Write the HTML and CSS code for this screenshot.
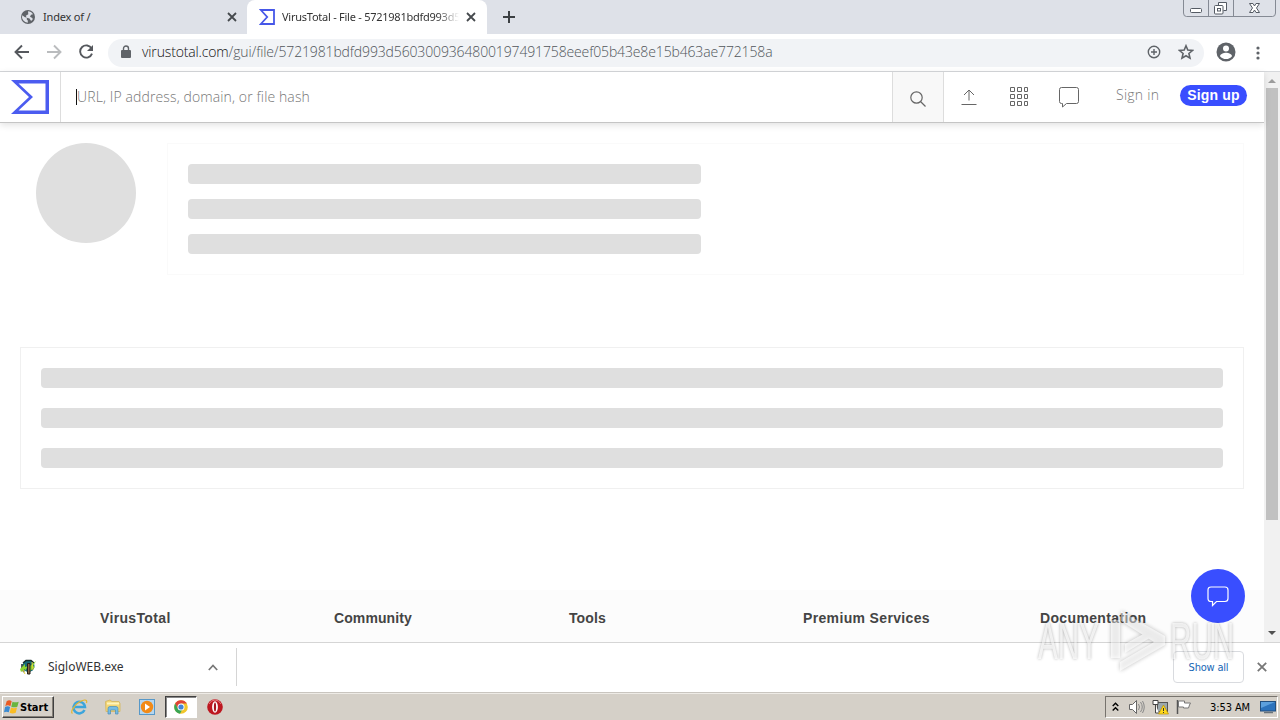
FILE: index.html
```html
<!DOCTYPE html>
<html lang="en">
<head>
    <meta charset="UTF-8">
    <meta name="viewport" content="width=device-width, initial-scale=1.0">
    <title>VirusTotal - File</title>
    <link rel="stylesheet" href="styles.css">
</head>
<body>
    <div class="desktop">
        <!-- Browser tabs -->
        <div class="tabs">
            <div class="tab">
                <svg class="favicon" width="16" height="16" viewBox="0 0 16 16">
                    <circle cx="8" cy="8" r="7" fill="#5f6368"/>
                    <path d="M2.2 6.2L5 8.2l1.8.4v2l1 1v2.2A6 6 0 0 1 2.2 6.2zM8 2.2c2 0 4 1.3 5 3l-2 .5-1 2 2.3 1.2.5 1.3-1.7 1.7-1.6-2.5-2.7-.7-1-2 2.5-1.5z" fill="#dee1e8"/>
                </svg>
                <span class="tab-title">Index of /</span>
                <svg class="tab-close" width="10" height="10" viewBox="0 0 10 10"><path d="M1 1l8 8M9 1L1 9"/></svg>
            </div>
            <div class="tab active">
                <svg class="favicon" width="16" height="16" viewBox="0 0 16 16"><path d="M1.8 1H15v14H1.8l6.4-7z" fill="none" stroke="#4657e8" stroke-width="1.8"/></svg>
                <span class="tab-title fade">VirusTotal - File - 5721981bdfd993d5</span>
                <svg class="tab-close" width="10" height="10" viewBox="0 0 10 10"><path d="M1 1l8 8M9 1L1 9"/></svg>
            </div>
            <svg class="new-tab" width="12" height="12" viewBox="0 0 12 12"><path d="M6 0v12M0 6h12" stroke="#3c4043" stroke-width="2"/></svg>
            <svg class="window-buttons" width="94" height="17" viewBox="0 0 94 17" fill="none" stroke="#858a94">
                <path d="M.5 0v13q0 3.5 3 3.5h86q3 0 3-3.5V0M25.5 0v16M50.5 0v16"/>
                <g stroke="#555b64">
                    <rect x="7.5" y="8.500" width="11" height="4" rx="1" fill="#fff"/>
                    <path d="M35.5 5V2.500h8v8H40.5" fill="#fff"/>
                    <rect x="31.5" y="5.500" width="8.500" height="8.500" rx="1" fill="#fff"/>
                    <rect x="34.5" y="8.500" width="3" height="2.500"/>
                    <path d="M66.5 3.500h3.500l1.500 2.500 1.500-2.500h3.500L73.500 8l3 4.500H73l-1.500-2.500-1.500 2.500h-3.500l3-4.500z" fill="#fff"/>
                </g>
            </svg>
        </div>

        <!-- Address bar -->
        <div class="toolbar">
            <svg class="nav-icon" width="16" height="16" viewBox="0 0 16 16"><path d="M15 8H2.500M8 1.500L1.500 8 8 14.500"/></svg>
            <svg class="nav-icon disabled" width="16" height="16" viewBox="0 0 16 16"><path d="M1 8h12.500M8 1.500L14.500 8 8 14.500"/></svg>
            <svg class="nav-icon" width="16" height="16" viewBox="0 0 16 16"><path d="M13.600 4.500A6.100 6.100 0 1 0 14 9.600"/><path d="M15 1v6H9z" fill="#55585d" stroke="none"/></svg>
            <div class="address">
                <svg width="10" height="14" viewBox="0 0 10 14"><rect x="0" y="5" width="10" height="8" rx="1" fill="#5f6368"/><path d="M2.500 6V3.500a2.500 2.500 0 0 1 5 0V6" fill="none" stroke="#5f6368" stroke-width="1.400"/></svg>
                <span class="url"><span class="host">virustotal.com</span>/gui/file/5721981bdfd993d5603009364800197491758eeef05b43e8e15b463ae772158a</span>
                <svg class="zoom-icon" width="14" height="14" viewBox="0 0 14 14" fill="none" stroke="#5f6368" stroke-width="1.400"><circle cx="7" cy="7" r="5.700"/><path d="M7 4v6M4 7h6"/></svg>
                <svg class="star-icon" width="16" height="16" viewBox="0 0 16 16"><path d="M8 1.800l1.800 4.300 4.600.4-3.500 3 1.100 4.600L8 11.700l-4 2.400 1.100-4.600-3.500-3 4.600-.4z" fill="none" stroke="#5f6368" stroke-width="1.600"/></svg>
            </div>
            <svg class="profile" width="20" height="20" viewBox="0 0 20 20"><circle cx="10" cy="10" r="9.500" fill="#5f6368"/><circle cx="10" cy="6.500" r="3" fill="#fff"/><path d="M4 14.200c0-2.300 3.600-3.500 6-3.500s6 1.200 6 3.500c-1.500 1.900-3.500 2.800-6 2.800s-4.500-.9-6-2.800z" fill="#fff"/></svg>
            <svg class="menu-dots" width="4" height="14" viewBox="0 0 4 14" fill="#5f6368"><circle cx="2" cy="2" r="1.600"/><circle cx="2" cy="7" r="1.600"/><circle cx="2" cy="12" r="1.600"/></svg>
        </div>

        <!-- Page content -->
        <div class="viewport">
            <div class="page">
                <header class="header">
                    <div class="logo">
                        <svg width="38" height="34" viewBox="0 0 38 34"><path d="M0 0h38v34H0l18-17zM7.500 3.500L22 17 7.500 30.500h27v-27z" fill="#4b5cf0" fill-rule="evenodd"/></svg>
                    </div>
                    <div class="search"><span class="caret"></span><span class="placeholder">URL, IP address, domain, or file hash</span></div>
                    <div class="search-btn">
                        <svg width="16" height="16" viewBox="0 0 16 16" fill="none" stroke="#666" stroke-width="1.200"><circle cx="6.500" cy="6.500" r="5.700"/><path d="M10.500 10.500l5 5"/></svg>
                    </div>
                    <div class="header-icons">
                        <svg width="16" height="16" viewBox="0 0 16 16"><path d="M8 11.500V1M3 6l5-5 5 5M.5 15.500h15"/></svg>
                        <svg width="20" height="20" viewBox="0 0 20 20"><path d="M1.500.5h4v4h-4zM8.500.5h4v4h-4zM15.500.5h3v4h-3zM1.500 7.500h4v4h-4zM8.500 7.500h4v4h-4zM15.500 7.500h3v4h-3zM1.500 14.500h4v4h-4zM8.500 14.500h4v4h-4zM15.500 14.500h3v4h-3z"/></svg>
                        <svg width="20" height="21" viewBox="0 0 20 21"><path d="M2.500.5h15q2 0 2 2v12q0 2-2 2H7.500L3.500 20v-3.500h-1q-2 0-2-2v-12q0-2 2-2z"/></svg>
                    </div>
                    <span class="sign-in">Sign in</span>
                    <span class="sign-up"><span class="sign-up-text">Sign up</span></span>
                </header>
                <main class="content">
                    <div class="summary">
                        <div class="circle"></div>
                        <div class="card details">
                            <div class="bar"></div>
                            <div class="bar"></div>
                            <div class="bar"></div>
                        </div>
                    </div>
                    <div class="card report">
                        <div class="bar"></div>
                        <div class="bar"></div>
                        <div class="bar"></div>
                    </div>
                </main>
                <footer class="footer">
                    <span>VirusTotal</span>
                    <span class="tight">Community</span>
                    <span class="tight">Tools</span>
                    <span>Premium Services</span>
                    <span>Documentation</span>
                </footer>
                <div class="chat">
                    <svg width="22" height="21" viewBox="0 0 22 21"><path d="M4 1h14q3 0 3 3v8.500q0 3-3 3H9.500L5.500 19.500v-4H4q-3 0-3-3V4q0-3 3-3z" fill="none" stroke="#fff" stroke-width="1.200"/></svg>
                </div>
            </div>
            <div class="scrollbar">
                <svg width="16" height="16" viewBox="0 0 16 16"><path d="M4 11l4-4 4 4z" fill="#9c9c9c"/></svg>
                <div class="thumb"></div>
                <svg class="down" width="16" height="16" viewBox="0 0 16 16"><path d="M4 5h8l-4 4z" fill="#505050"/></svg>
            </div>
        </div>

        <!-- Downloads -->
        <div class="downloads">
            <div class="download">
                <svg width="16" height="16" viewBox="0 0 16 16">
                    <circle cx="8.500" cy="7" r="6" fill="#176a78"/>
                    <path d="M3 4l3-2.500h5L14 4M2 5v5l2 3" fill="none" stroke="#172b28" stroke-width="1.500"/>
                    <path d="M0 10l5-5v3l3-1-3 5v-2l-4 3zM10 7l6-5-3 5 2 1-5 4z" fill="#8ed52e"/>
                    <path d="M7.500 4.500h2.500V15H7.500z" fill="#8b6a43" stroke="#251f18"/>
                    <path d="M3 11l2 4M12 3l1 8" stroke="#e5d237"/>
                </svg>
                <span class="file-name">SigloWEB.exe</span>
                <svg class="chevron" width="10" height="7" viewBox="0 0 10 7"><path d="M.8 6L5 1.500 9.200 6" fill="none" stroke="#777" stroke-width="1.700"/></svg>
            </div>
            <div class="show-all"><span>Show all</span></div>
            <svg class="bar-close" width="10" height="10" viewBox="0 0 10 10"><path d="M.8.8l8.400 8.400M9.200.8L.8 9.200" stroke="#777" stroke-width="1.800"/></svg>
        </div>

        <!-- Windows taskbar -->
        <div class="taskbar">
            <div class="start">
                <svg width="16" height="16" viewBox="0 0 15 15">
                    <path d="M2.500 2q2.500-1.500 4.700 0L6 6.700q-2.500-1.500-4.800 0z" fill="#e95b24"/>
                    <path d="M8 2.500q2.500 1.300 5.800 0l-1.300 4.700q-3 1.300-5.700 0z" fill="#6ab53e"/>
                    <path d="M1 7.500q2.500-1.300 4.700 0l-1.200 5q-2.500-1.300-4.500 0z" fill="#3b8bd2"/>
                    <path d="M6.600 8q2.500 1.300 5.600 0L11 13q-3 1.300-5.700 0z" fill="#fabd25"/>
                </svg>
                <span class="start-text">Start</span>
            </div>
            <div class="quick">
                <svg width="18" height="18" viewBox="0 0 18 18"><path d="M14.500 12A5.800 5.800 0 1 1 15 9H5" fill="none" stroke="#3ca5dc" stroke-width="2.500"/><path d="M2.500 15.500C-1 14 7 3 14.500 2q3-.3 2 3" fill="none" stroke="#e4b62f" stroke-width="1.200"/></svg>
            </div>
            <div class="quick">
                <svg width="18" height="18" viewBox="0 0 18 18"><path d="M1.500 3.500L6 2l2 1.500h7l1 2v8H2z" fill="#f4d675" stroke="#d6bb6c"/><path d="M3 5.500h12" stroke="#fff4bb" stroke-width="2"/><path d="M4 16v-5.500q0-2 2-2h6q2 0 2 2V16h-2.500v-4h-5v4z" fill="#75bce4" stroke="#4b8eb8" stroke-width=".7"/></svg>
            </div>
            <div class="quick">
                <svg width="18" height="18" viewBox="0 0 18 18"><rect x="1.500" y="1.500" width="15" height="15" fill="#b5d6ef" stroke="#5798c8"/><circle cx="9" cy="9" r="6.200" fill="#f28a16"/><path d="M7 5.500L12 9l-5 3.500z" fill="#fff"/></svg>
            </div>
            <div class="quick pressed">
                <svg width="16" height="16" viewBox="0 0 16 16"><circle cx="8" cy="8" r="6.800" fill="#f1c62c"/><path d="M2.100 4.600A6.800 6.800 0 0 1 13.900 4.600H8L5 10z" fill="#df4337"/><path d="M2.100 4.600L5.200 10 9 11l-2 3.700A6.800 6.800 0 0 1 2.100 4.600z" fill="#38a554"/><circle cx="8" cy="8" r="3.500" fill="#fff"/><circle cx="8" cy="8" r="2.600" fill="#4285d8"/></svg>
            </div>
            <div class="quick">
                <svg width="18" height="18" viewBox="0 0 18 18"><circle cx="9" cy="9" r="7.800" fill="#bd1720"/><path d="M3 6q2-4 6-4t6 4" fill="none" stroke="#e7777b"/><ellipse cx="9" cy="9" rx="2.900" ry="5.700" fill="#fff"/><ellipse cx="9" cy="9" rx="1.100" ry="4.600" fill="#a6141d"/></svg>
            </div>
            <div class="tray">
                <svg class="tray-up" width="7" height="10" viewBox="0 0 7 10"><path d="M.7 4l2.800-2.800L6.300 4M.7 8.500l2.800-2.800 2.800 2.800" fill="none" stroke="#000" stroke-width="1.400"/></svg>
                <svg class="speaker" width="17" height="16" viewBox="0 0 17 16"><path d="M1.500 5.500h3l4-4v13l-4-4h-3z" fill="#fff" stroke="#666"/><path d="M10.500 5q2 3 0 6M12.500 3q3.500 5 0 10M14.500 2q3.500 6 0 12" fill="none" stroke="#888"/></svg>
                <svg class="network" width="17" height="16" viewBox="0 0 17 16"><rect x="5.500" y="3.500" width="10" height="9" fill="#9ca8ad" stroke="#555"/><path d="M1 1.500h5v4H1zM3.500 5.500V14H7" fill="#fff" stroke="#444"/><path d="M11.500 6l5 9h-10z" fill="#ffd91c" stroke="#bd9200" stroke-width=".7"/><path d="M11.500 9v3m0 1v1" stroke="#333"/></svg>
                <svg class="flag" width="16" height="16" viewBox="0 0 16 16"><path d="M1.500 1v14" stroke="#555" stroke-width="1.500"/><path d="M2.500 2h6v2h6q-1 1.500-2 5h-5V8h-5z" fill="#fff" stroke="#777"/></svg>
                <span class="clock">3:53 AM</span>
                <svg class="monitor" width="16" height="14" viewBox="0 0 16 14"><rect x=".5" y="1.500" width="15" height="9.500" fill="#2d73bc" stroke="#234f7e"/><path d="M1 2h14L1 8z" fill="#5da0dd"/><path d="M4 12.500h9" stroke="#69737b" stroke-width="1.500"/></svg>
            </div>
        </div>

        <div class="watermark">
            <span class="mark-text">ANY</span>
            <svg class="mark-play" width="60" height="66" viewBox="0 0 60 66"><path d="M3 12h9v38H3zM13 3l44 25v9L12 63v-9l34-20-33-21zM17 36l22-12 6 4-28 17z"/></svg>
            <span class="mark-text">RUN</span>
        </div>
    </div>
</body>
</html>
```

FILE: styles.css
```css
* {
    box-sizing: border-box;
}

body {
    margin: 0;
    background-color: #fff;
    font-family: "DejaVu Sans Condensed", "DejaVu Sans", sans-serif;
    color: #333;
}

svg {
    display: block;
    flex-shrink: 0;
}

.desktop {
    width: 1280px;
    height: 720px;
    display: flex;
    flex-direction: column;
    position: relative;
    overflow: hidden;
}

.tabs {
    height: 34px;
    flex-shrink: 0;
    display: flex;
    background-color: #dee1e8;
}

.tab {
    width: 247px;
    height: 34px;
    display: flex;
    align-items: center;
    padding: 0 10px 0 20px;
    font-family: "Noto Sans", sans-serif;
    font-size: 11px;
}

.tab.active {
    width: 240px;
    padding: 0 11px 0 12px;
    background-color: #fff;
    border-radius: 8px 8px 0 0;
}

.tab-title {
    width: 177px;
    margin: 0 0 1px 7px;
    white-space: nowrap;
}

.tab:first-child .tab-title {
    letter-spacing: -0.2px;
}

.fade {
    letter-spacing: -0.25px;
    -webkit-mask-image: linear-gradient(to right, #000 88%, transparent);
    mask-image: linear-gradient(to right, #000 88%, transparent);
}

.tab-close {
    margin-left: auto;
    fill: none;
    stroke: #45494d;
    stroke-width: 1.8;
}

.new-tab {
    margin: 11px 0 0 16px;
}

.window-buttons {
    margin-left: auto;
    margin-right: 3px;
}

.toolbar {
    height: 38px;
    flex-shrink: 0;
    display: flex;
    align-items: center;
    padding: 0 20px 0 14px;
    border-bottom: 1px solid #d5d7da;
}

.nav-icon {
    margin: 0 16px 1px 0;
    fill: none;
    stroke: #55585d;
    stroke-width: 1.9;
}

.nav-icon.disabled {
    stroke: #babcbe;
}

.nav-icon:nth-child(3) {
    margin-right: 14px;
}

.address {
    width: 1096px;
    height: 28px;
    display: flex;
    align-items: center;
    padding: 0 10px 2px 13px;
    background-color: #f1f3f6;
    border-radius: 14px;
}

.url {
    margin-left: 11px;
    font-family: "Open Sans", sans-serif;
    font-size: 14px;
    font-weight: 300;
    letter-spacing: -0.14px;
    color: #50555a;
    white-space: nowrap;
}

.host {
    color: #111;
}

.zoom-icon {
    margin-left: auto;
}

.star-icon {
    margin-left: 17px;
}

.profile {
    margin: 0 0 1px 12px;
}

.menu-dots {
    margin-left: auto;
}

.viewport {
    height: 570px;
    flex-shrink: 0;
    display: flex;
}

.page {
    width: 1264px;
    display: flex;
    flex-direction: column;
    position: relative;
    font-family: "Liberation Sans", Arial, sans-serif;
}

.header {
    height: 51px;
    flex-shrink: 0;
    display: flex;
    background-color: #fff;
    border-bottom: 1px solid #c5c5c5;
    box-shadow: 0 2px 7px rgba(0, 0, 0, 0.12);
}

.logo {
    width: 61px;
    padding: 8px 0 0 11px;
    border-right: 1px solid #ddd;
}

.search {
    width: 831px;
    display: flex;
    align-items: center;
    padding-left: 15px;
}

.caret {
    width: 1px;
    height: 16px;
    background-color: #111;
}

.placeholder {
    padding-bottom: 2px;
    font-family: "Open Sans", sans-serif;
    font-size: 14px;
    font-weight: 300;
    letter-spacing: 0.12px;
    color: #777;
}

.search-btn {
    width: 52px;
    display: flex;
    align-items: center;
    justify-content: center;
    padding-top: 4px;
    background-color: #f8f8f8;
    border-left: 1px solid #ddd;
    border-right: 1px solid #ddd;
}

.header-icons {
    width: 150px;
    display: grid;
    grid-template-columns: repeat(3, 50px);
    justify-items: center;
    align-items: center;
    fill: none;
    stroke: #666;
    stroke-width: 1;
}

.sign-in {
    width: 44px;
    margin: 13px 0 0 22px;
    font-family: "Open Sans", sans-serif;
    font-size: 14px;
    font-weight: 300;
    letter-spacing: 0.25px;
    color: #777;
    white-space: nowrap;
}

.sign-up {
    width: 67px;
    height: 21px;
    display: flex;
    align-items: center;
    justify-content: center;
    margin: 13px 0 0 20px;
    padding-bottom: 1px;
    background-color: #394eff;
    border-radius: 11px;
    font-size: 14px;
    font-weight: bold;
    letter-spacing: 0.2px;
    color: #fff;
}

.content {
    height: 467px;
    padding: 20px;
}

.summary {
    display: flex;
    gap: 31px;
    padding-left: 16px;
}

.circle {
    width: 100px;
    height: 100px;
    flex-shrink: 0;
    background-color: #dfdfdf;
    border-radius: 50%;
}

.card {
    display: flex;
    flex-direction: column;
    padding: 20px;
    border: 1px solid #f0f0f0;
}

.details {
    width: 1077px;
    height: 132px;
    gap: 15px;
    border-color: #fafafa;
}

.details .bar {
    width: 513px;
}

.report {
    height: 142px;
    gap: 20px;
    margin-top: 72px;
}

.bar {
    height: 20px;
    flex-shrink: 0;
    background-color: #dfdfdf;
    border-radius: 4px;
}

.footer {
    height: 52px;
    display: grid;
    grid-template-columns: 234px 235px 234px 237px 1fr;
    align-items: center;
    padding: 3px 0 0 100px;
    background-color: #fcfcfc;
    font-size: 14px;
    font-weight: bold;
    letter-spacing: 0.35px;
    color: #444;
}

.footer span {
    justify-self: start;
}

.footer .tight {
    letter-spacing: 0.1px;
}

.chat {
    position: absolute;
    top: 497px;
    right: 19px;
    width: 54px;
    height: 54px;
    display: flex;
    align-items: center;
    justify-content: center;
    background-color: #394eff;
    border-radius: 50%;
    z-index: 2;
}

.scrollbar {
    width: 16px;
    display: flex;
    flex-direction: column;
    align-items: center;
    background-color: #f1f1f1;
}

.thumb {
    width: 12px;
    height: 432px;
    background-color: #c1c1c1;
}

.down {
    margin-top: auto;
}

.downloads {
    height: 51px;
    flex-shrink: 0;
    display: flex;
    align-items: center;
    padding: 0 13px 2px 0;
    border-top: 1px solid #d5d5d5;
}

.download {
    width: 237px;
    height: 38px;
    display: flex;
    align-items: center;
    padding: 0 18px 0 20px;
    border-right: 1px solid #d5d5d5;
}

.file-name {
    margin: 0 0 1px 12px;
    font-family: "Noto Sans", sans-serif;
    font-size: 12px;
}

.chevron {
    margin-left: auto;
}

.show-all {
    width: 71px;
    height: 32px;
    display: flex;
    align-items: center;
    justify-content: center;
    margin-left: auto;
    border: 1px solid #d9dbdf;
    border-radius: 4px;
    font-size: 11px;
    letter-spacing: -0.2px;
    color: #1967b5;
}

.bar-close {
    margin-left: 13px;
}

.taskbar {
    height: 27px;
    display: flex;
    align-items: center;
    padding: 0 2px;
    background-color: #d5d0c8;
    border-top: 1px solid #eeebe6;
    box-shadow: 0 -1px #c9c5bf;
    color: #000;
}

.start {
    width: 52px;
    height: 22px;
    display: flex;
    align-items: center;
    padding-left: 1px;
    border: 1px solid;
    border-color: #fff #404040 #404040 #fff;
    box-shadow: inset -1px -1px #858078;
    font-size: 11px;
    font-weight: bold;
    margin-right: 9px;
}

.quick {
    width: 32px;
    height: 22px;
    display: flex;
    align-items: center;
    justify-content: center;
    margin-right: 2px;
}

.quick.pressed {
    background-color: #fff;
    border: 1px solid;
    border-color: #404040 #fff #fff #404040;
    box-shadow: inset 1px 1px #888;
}

.tray {
    width: 173px;
    height: 22px;
    display: flex;
    align-items: center;
    margin-left: auto;
    padding: 0 1px 0 6px;
    border: 1px solid;
    border-color: #77736d #fff #fff #77736d;
    font-size: 11px;
}

.speaker {
    margin-left: 9px;
}

.network,
.flag {
    margin-left: 7px;
}

.clock {
    margin-left: auto;
    letter-spacing: -0.1px;
    white-space: nowrap;
}

.monitor {
    margin-left: 10px;
}

/* Translucent mark above the window */
.watermark {
    position: absolute;
    left: 1038px;
    top: 608px;
    width: 198px;
    height: 66px;
    display: flex;
    align-items: center;
    z-index: 3;
    opacity: 0.6;
    font-family: "Liberation Sans", sans-serif;
    font-size: 52px;
    color: rgba(255, 255, 255, 0.75);
    text-shadow: 0 0 4px rgba(0, 0, 0, 0.5);
}

.mark-text {
    width: 62px;
    transform: scaleX(0.57);
    transform-origin: left;
}

.mark-play {
    margin: 0 2px 0 8px;
    fill: #fff;
    fill-opacity: 0.7;
    filter: drop-shadow(0 0 2px rgba(0, 0, 0, 0.6));
}
```
